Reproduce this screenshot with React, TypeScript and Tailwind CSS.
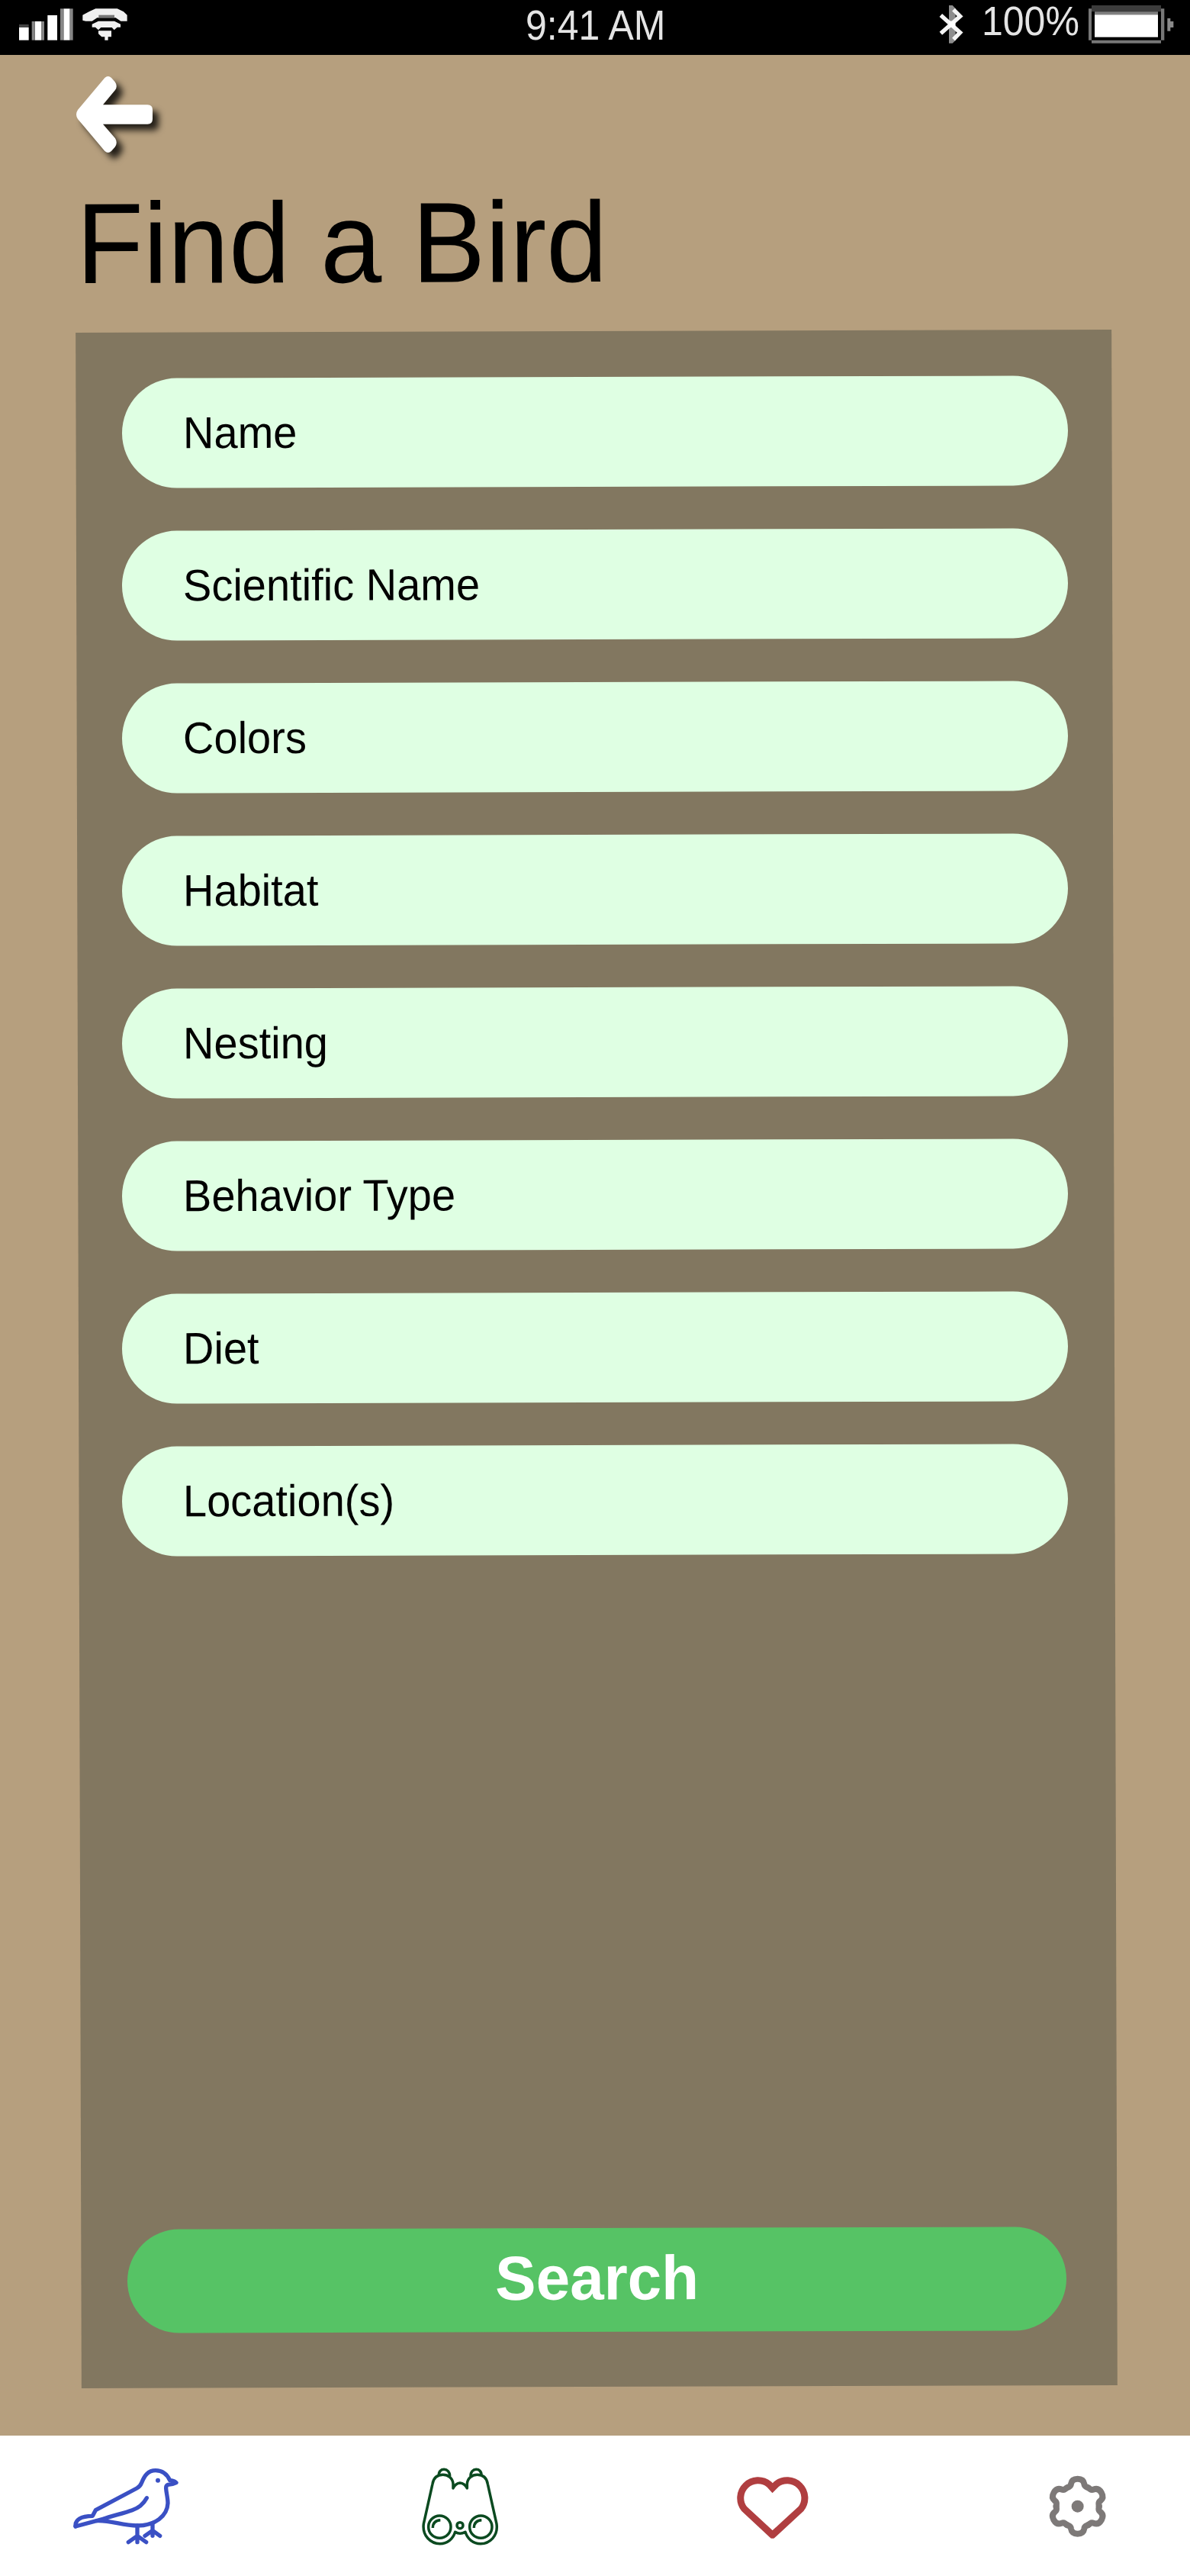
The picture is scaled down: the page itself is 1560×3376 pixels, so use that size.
import React from "react";

const fields = [
  "Name",
  "Scientific Name",
  "Colors",
  "Habitat",
  "Nesting",
  "Behavior Type",
  "Diet",
  "Location(s)",
];

function SignalIcons() {
  return (
    <svg className="block h-[72px] w-[260px]" viewBox="0 0 780 216">
      <g fill="#fff">
        <rect x="75" y="108" width="38" height="50" />
        <rect x="137" y="84" width="25" height="74" />
        <rect x="187" y="60" width="38" height="98" />
        <rect x="250" y="34" width="25" height="124" />
      </g>
      <g fill="#858585">
        <rect x="75" y="96" width="38" height="12" fill="#444" />
        <rect x="125" y="84" width="12" height="74" />
        <rect x="162" y="84" width="12" height="74" />
        <rect x="237" y="34" width="13" height="124" />
        <rect x="275" y="34" width="12" height="124" />
      </g>
      <g fill="#f0f0f0">
        <path d="M325 59 L350 46 L376 34 H461 L486 46 L500 59 V83 H475 L455 70 H382 L362 83 H337 L325 80Z" />
        <path d="M362 95 L387 83 H450 L474 95 V107 H461 L449 118 L440 108 H397 L387 118 L375 107 H362Z" />
        <path d="M387 121 H438 V145 H425 V158 H412 V145 H400 L387 133Z" />
      </g>
      <path d="M388 59 H450 V70 H388Z" fill="#777" />
    </svg>
  );
}

function BluetoothIcon() {
  return (
    <svg className="block h-[72px] w-[40px]" viewBox="84 0 120 216">
      <path d="M132 21 H146 L158 34 V158 L146 170 H132Z" fill="#8c8c8c" />
      <path d="M100 60 L176 128 L150 155 M100 131 L176 64 L150 38" fill="none" stroke="#f4f4f4" strokeWidth="16" />
      <rect x="132" y="83" width="25" height="25" fill="#fff" />
    </svg>
  );
}

function BatteryIcon() {
  return (
    <svg className="block h-[72px] w-[120px]" viewBox="676 0 360 216">
      <path d="M694 21 H967 V46 H694Z" fill="#3c3c3c" />
      <path d="M706 46 H955 V59 H706Z" fill="#808080" />
      <path d="M682 34 H694 V158 H682Z M967 34 H980 V158 H967Z M694 158 H967 V170 H694Z" fill="#777" />
      <rect x="706" y="58" width="249" height="88" fill="#fff" />
      <path d="M992 72 H1004 V84 H1016 V108 H1004 V122 H992Z" fill="#8a8a8a" />
    </svg>
  );
}

function BackArrow() {
  return (
    <svg
      className="block h-[100px] w-[100px] overflow-visible drop-shadow-[8px_8px_4px_rgba(0,0,0,0.8)]"
      viewBox="0 0 300 300"
    >
      <path
        d="M112 6 Q125 -6 138 6 L152 22 Q164 38 153 54 L105 112 H280 Q300 112 300 132 V168 Q300 188 280 188 H105 L153 244 Q164 262 152 278 L138 294 Q125 306 112 294 L6 168 Q-6 150 6 132 Z"
        fill="#fff"
      />
    </svg>
  );
}

function BirdIcon() {
  return (
    <svg className="block h-[140px] w-[170px]" viewBox="0 0 510 420" fill="none" stroke="#3a50c4" strokeWidth="16" strokeLinecap="round" strokeLinejoin="round">
      <path d="M57 303 Q54 263 124 262 L136 239 L298 153 Q311 146 317 131 C328 104 341 83 372 83 C400 83 418 100 428 122 Q443 122 453 131 Q440 138 421 139 Q412 142 413 154 C414 172 420 190 420 212 C418 262 370 300 300 300 C240 300 195 278 140 281" />
      <path d="M57 303 L165 274 C200 262 250 250 280 239 Q318 226 337 191" />
      <path d="M300 300 V365 M265 365 L300 340 L335 365 M360 290 V340 M330 340 L360 319 L389 340" />
      <circle cx="381" cy="122" r="9" fill="#3a50c4" stroke="none" />
    </svg>
  );
}

function BinocularsIcon() {
  return (
    <svg className="block h-[140px] w-[150px]" viewBox="0 0 450 420" fill="none" stroke="#0b4a20" strokeWidth="10.5" strokeLinejoin="round">
      <path d="M192 153 V135 C190 112 172 100 152 100 C130 100 115 113 111 136 L76 293 C70 340 104 371 140 371 C170 371 192 352 200 325 Q219 337 240 325 C248 352 270 371 300 371 C336 371 370 340 363 293 L328 136 C324 113 309 100 287 100 C267 100 249 112 247 135 V153 Q237 133 219 132 Q202 133 192 153Z" />
      <circle cx="139" cy="305" r="44" />
      <circle cx="301" cy="305" r="44" />
      <circle cx="219" cy="299" r="12" />
      <path d="M136 103 C133 70 180 70 179 106 M261 106 C259 70 306 70 303 103" />
      <path d="M112 309 Q112 280 142 278 M274 309 Q274 280 304 278" />
    </svg>
  );
}

function HeartIcon() {
  return (
    <svg className="block h-[140px] w-[150px]" viewBox="0 0 450 420" fill="none" stroke="#b03e40" strokeWidth="27" strokeLinecap="round" strokeLinejoin="miter">
      <path d="M218 337 L107 234 A69 69 0 0 1 205 138 L218 152 L232 138 A69 69 0 0 1 330 234 L218 337" />
    </svg>
  );
}

function GearIcon() {
  const angles = [0, 60, 120, 180, 240, 300];
  return (
    <svg className="block h-[140px] w-[130px]" viewBox="0 0 390 420" fill="none" stroke="#7d7978" strokeWidth="24" strokeLinecap="round" strokeLinejoin="round">
      <g transform="translate(188 224)">
        {angles.map((a) => (
          <path
            key={a}
            transform={`rotate(${a})`}
            d="M-42 -73 L-33 -77 Q-27 -80 -26 -88 C-24 -101 -15 -108 0 -108 C15 -108 24 -101 26 -88 Q27 -80 33 -77 L42 -73"
          />
        ))}
        <circle r="24" fill="#7d7978" stroke="none" />
      </g>
    </svg>
  );
}

export default function App() {
  return (
    <div className="flex h-[3376px] w-[1560px] flex-col overflow-hidden bg-[#b69f7e] font-['Liberation_Sans',Arial,sans-serif] text-black">
      <header className="flex h-[72px] shrink-0 items-center bg-black text-[#e4e4e4]">
        <SignalIcons />
        <div className="ml-[429px] w-[190px] -translate-y-[3px] scale-y-[1.1] text-[50px] leading-none whitespace-nowrap">
          9:41 AM
        </div>
        <div className="ml-auto flex items-center">
          <BluetoothIcon />
          <div className="ml-[19px] w-[138px] -translate-y-[8px] scale-y-[1.075] text-[50px] leading-none whitespace-nowrap">
            100%
          </div>
          <BatteryIcon />
          <div className="w-[15px]" />
        </div>
      </header>

      <main className="flex grow flex-col pt-[28px]">
        <button aria-label="Back" className="ml-[100px] w-[100px]">
          <BackArrow />
        </button>
        <h1 className="mt-[47px] ml-[100px] w-[694px] -rotate-[0.16deg] scale-y-[1.041] text-[144px] leading-none whitespace-nowrap">
          Find a Bird
        </h1>

        <section className="relative mt-[42.6px] ml-[103px] flex h-[2693.6px] w-[1357.5px] flex-col justify-between pt-[60.4px] pb-[71.2px]">
          <div className="absolute inset-0 -rotate-[0.164deg] bg-[#827760]" />
          <div className="relative ml-[57.3px] flex w-[1240.4px] flex-col gap-14">
            {fields.map((label) => (
              <div key={label} className="flex h-36 -rotate-[0.16deg] items-center rounded-full bg-[#dfffe3] pl-[80px]">
                <span className="scale-y-[1.041] text-[56px] leading-none">{label}</span>
              </div>
            ))}
          </div>
          <button className="relative ml-[63.7px] flex h-[136px] w-[1231.4px] -rotate-[0.16deg] items-center justify-center rounded-full bg-[#56c365] text-[80px] leading-none font-bold text-white">
            <span className="-translate-y-[2px] scale-y-[1.02]">Search</span>
          </button>
        </section>
      </main>

      <nav className="flex h-[184px] shrink-0 items-start bg-white pt-[18px] pl-[80px]">
        <BirdIcon />
        <div className="ml-[280px]">
          <BinocularsIcon />
        </div>
        <div className="ml-[260px]">
          <HeartIcon />
        </div>
        <div className="ml-[260px]">
          <GearIcon />
        </div>
      </nav>
    </div>
  );
}
